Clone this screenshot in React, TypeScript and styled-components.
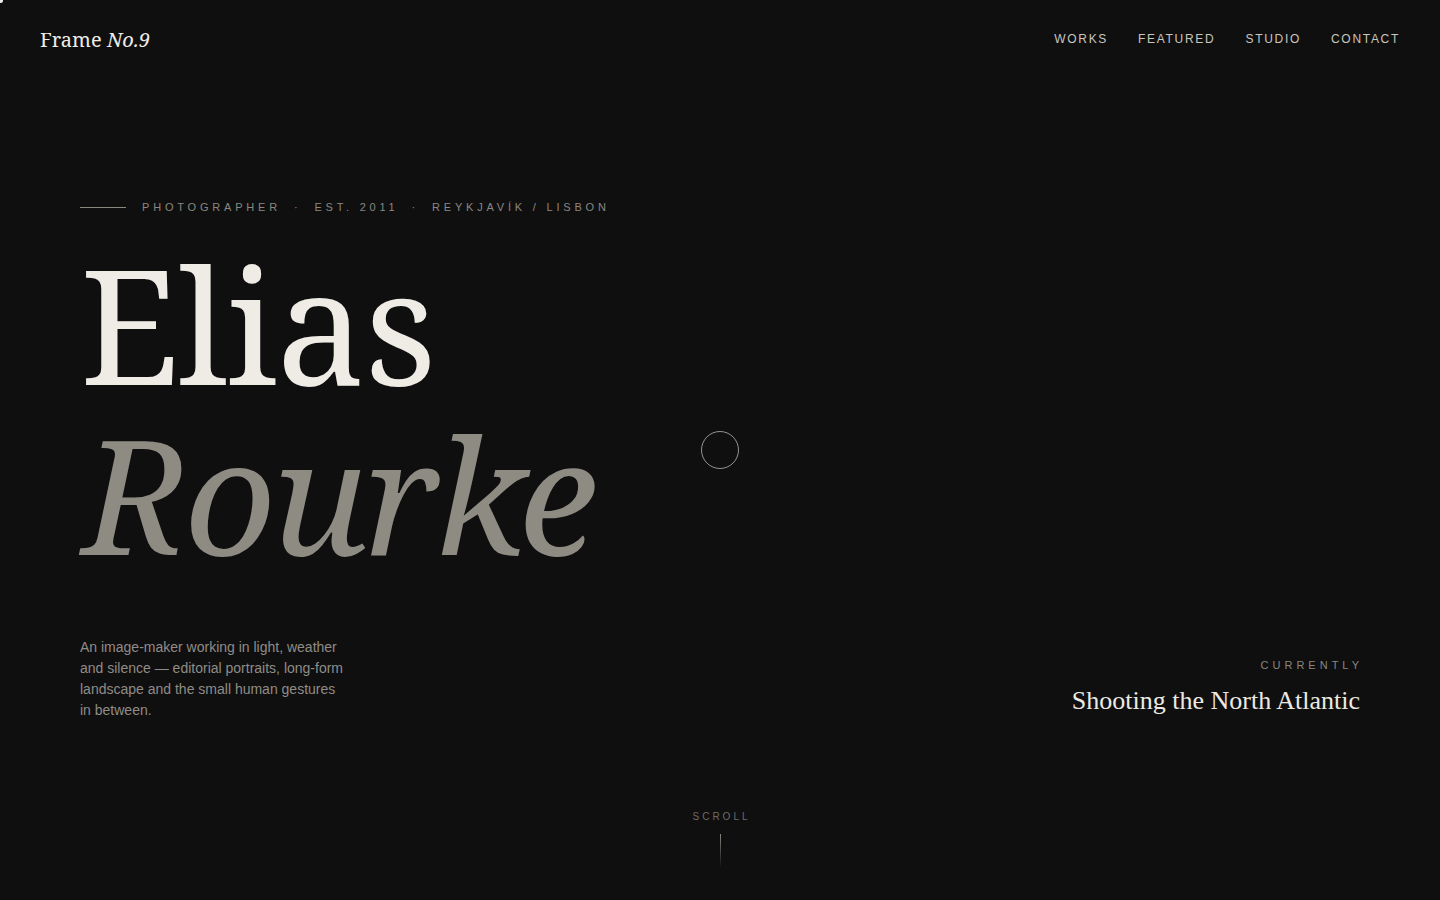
import React from 'react'
import styled, { createGlobalStyle } from 'styled-components'

const GlobalStyle = createGlobalStyle`
  html, body {
    margin: 0;
    padding: 0;
    background: #0f0f10;
  }
  * {
    box-sizing: border-box;
  }
`

const Page = styled.div`
  position: relative;
  height: 900px;
  overflow: hidden;
  display: flex;
  flex-direction: column;
  background: #0f0f10;
  color: #ece9e2;
  font-family: 'Liberation Sans', Arial, sans-serif;
`

const Header = styled.header`
  height: 78px;
  padding: 0 40px;
  display: flex;
  align-items: center;
  justify-content: space-between;
`

const Logo = styled.a`
  font-family: 'Noto Serif', 'DejaVu Serif', Georgia, serif;
  font-size: 20px;
  color: #efece6;
  text-decoration: none;

  em {
    font-style: italic;
  }
`

const Nav = styled.nav`
  display: flex;
  gap: 30px;
`

const NavLink = styled.a`
  font-size: 12px;
  letter-spacing: 1.7px;
  color: #c9c6bf;
  text-decoration: none;
  text-transform: uppercase;
`

const Hero = styled.main`
  padding: 0 80px;
  margin-top: 122px;
  display: flex;
  flex-direction: column;
`

const Eyebrow = styled.div`
  display: flex;
  align-items: center;
  gap: 16px;
  font-size: 11px;
  letter-spacing: 3.8px;
  color: #8a8780;
  text-transform: uppercase;
  line-height: 14px;
`

const Rule = styled.span`
  width: 46px;
  height: 1px;
  background: #8a8780;
`

const Dot = styled.span`
  margin: 0 13px;
`

const Name = styled.h1`
  margin: 24px 0 0;
  font-family: 'Noto Serif', 'DejaVu Serif', Georgia, serif;
  font-weight: 400;
  font-size: 160px;
  line-height: 170px;
`

const NameLine = styled.span<{ $italic?: boolean }>`
  display: block;
  font-style: ${(p) => (p.$italic ? 'italic' : 'normal')};
  color: ${(p) => (p.$italic ? '#8e8b83' : '#efece6')};
  letter-spacing: ${(p) => (p.$italic ? '-4px' : '-1.5px')};
  margin-left: ${(p) => (p.$italic ? '2px' : '0')};
`

const BottomRow = styled.div`
  margin-top: 59px;
  display: flex;
  justify-content: space-between;
  align-items: flex-end;
`

const Intro = styled.p`
  margin: 0;
  width: 268px;
  font-size: 14px;
  line-height: 21px;
  color: #8f8c86;
`

const Currently = styled.div`
  text-align: right;
  margin-bottom: 5px;
`

const Label = styled.div`
  font-size: 11px;
  letter-spacing: 4px;
  color: #8a8780;
  text-transform: uppercase;
  margin-right: -3px;
`

const Project = styled.div`
  margin-top: 15px;
  font-family: 'Liberation Serif', 'Times New Roman', serif;
  font-size: 26px;
  color: #ece9e2;
`

const Scroll = styled.div`
  margin-top: auto;
  padding-bottom: 32px;
  display: flex;
  flex-direction: column;
  align-items: center;
  gap: 12px;
`

const ScrollLabel = styled.span`
  font-size: 10px;
  letter-spacing: 3px;
  margin-right: -3px;
  color: #6e6b66;
`

const ScrollLine = styled.span`
  width: 1px;
  height: 34px;
  background: linear-gradient(to bottom, #8a8780, rgba(138, 135, 128, 0));
`

const CursorRing = styled.div`
  position: absolute;
  left: 701px;
  top: 431px;
  width: 38px;
  height: 38px;
  border-radius: 50%;
  border: 1px solid rgba(236, 233, 226, 0.6);
  pointer-events: none;
`

const CursorDot = styled.div`
  position: absolute;
  left: -2px;
  top: -2px;
  width: 5px;
  height: 5px;
  border-radius: 50%;
  background: #efece6;
  pointer-events: none;
`

export default function App() {
  return (
    <>
      <GlobalStyle />
      <Page>
        <Header>
          <Logo href="#">
            Frame <em>No.9</em>
          </Logo>
          <Nav>
            {['Works', 'Featured', 'Studio', 'Contact'].map((item) => (
              <NavLink key={item} href="#">
                {item}
              </NavLink>
            ))}
          </Nav>
        </Header>
        <Hero>
          <Eyebrow>
            <Rule />
            <span>
              Photographer<Dot>·</Dot>Est. 2011<Dot>·</Dot>Reykjavík / Lisbon
            </span>
          </Eyebrow>
          <Name>
            <NameLine>Elias</NameLine>
            <NameLine $italic>Rourke</NameLine>
          </Name>
          <BottomRow>
            <Intro>
              An image-maker working in light, weather and silence — editorial
              portraits, long-form landscape and the small human gestures in
              between.
            </Intro>
            <Currently>
              <Label>Currently</Label>
              <Project>Shooting the North Atlantic</Project>
            </Currently>
          </BottomRow>
        </Hero>
        <Scroll>
          <ScrollLabel>SCROLL</ScrollLabel>
          <ScrollLine />
        </Scroll>
        <CursorRing />
        <CursorDot />
      </Page>
    </>
  )
}
